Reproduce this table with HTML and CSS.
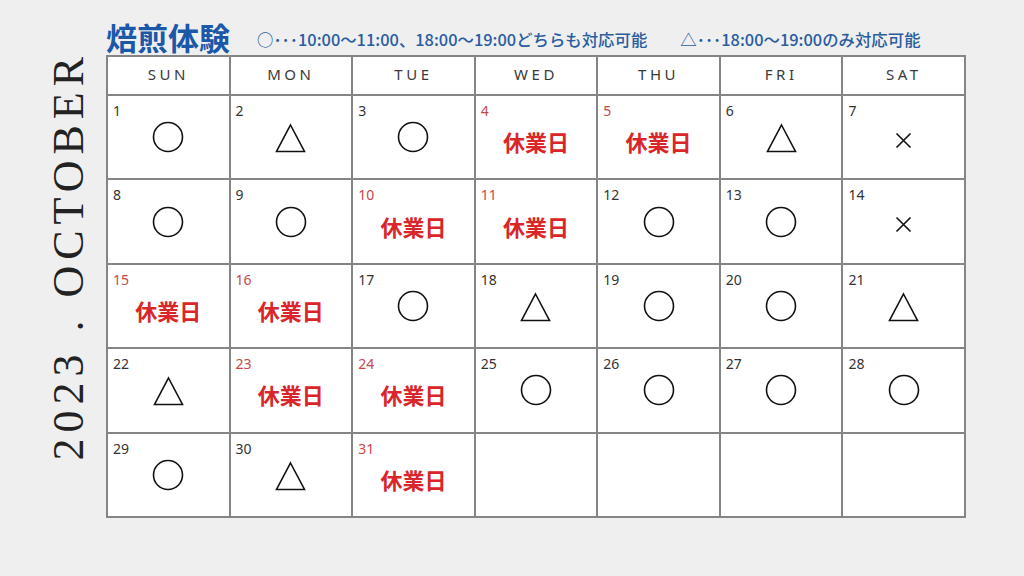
FILE: index.html
```html
<!DOCTYPE html>
<html lang="ja">
<head>
    <meta charset="UTF-8">
    <meta name="viewport" content="width=device-width, initial-scale=1.0">
    <title>焙煎体験 2023 . OCTOBER</title>
    <link rel="stylesheet" href="styles.css">
</head>
<body>
    <div class="page">
        <div class="side">
            <div class="month">2023 . OCTOBER</div>
        </div>
        <div class="main">
            <div class="head">
                <h1>焙煎体験</h1>
                <p class="legend">○･･･10:00～11:00、18:00～19:00どちらも対応可能</p>
                <p class="legend">△･･･18:00～19:00のみ対応可能</p>
            </div>
            <div class="cal">
                <div class="wd">SUN</div>
                <div class="wd">MON</div>
                <div class="wd">TUE</div>
                <div class="wd">WED</div>
                <div class="wd">THU</div>
                <div class="wd">FRI</div>
                <div class="wd">SAT</div>
            </div>
        </div>
    </div>
    <script>
        // o = both slots, t = evening only, x = full, c = closed
        const days = ['o','t','o','c','c','t','x',
                      'o','o','c','c','o','o','x',
                      'c','c','o','t','o','o','t',
                      't','c','c','o','o','o','o',
                      'o','t','c'];

        const marks = {
            o: '<svg class="mark" width="32" height="32" viewBox="0 0 32 32"><circle cx="16" cy="16" r="14.5"/></svg>',
            t: '<svg class="mark tri" width="31" height="30" viewBox="0 0 31 30"><polygon points="15.5,2 29.5,28.5 1.5,28.5"/></svg>',
            x: '<svg class="mark cross" width="17" height="17" viewBox="0 0 17 17"><path d="M1.5 1.5 L15.5 15.5 M15.5 1.5 L1.5 15.5"/></svg>',
            c: '<span class="mark closed">休業日</span>'
        };

        const cal = document.querySelector('.cal');
        for (let i = 0; i < 35; i++) {
            const cell = document.createElement('div');
            cell.className = 'day';
            const kind = days[i];
            if (kind) {
                if (kind === 'c') cell.classList.add('off');
                cell.innerHTML = '<span class="num">' + (i + 1) + '</span>' + marks[kind];
            }
            cal.appendChild(cell);
        }
    </script>
</body>
</html>
```

FILE: styles.css
```css
body {
    margin: 0;
    background: #efefef;
    font-family: "Noto Sans", "Noto Sans CJK JP", sans-serif;
    color: #333;
}

.page {
    display: flex;
    padding-top: 18px;
}

.side {
    width: 106px;
    display: flex;
    justify-content: flex-end;
    align-items: flex-start;
    padding-right: 15px;
    box-sizing: border-box;
}

.month {
    writing-mode: vertical-rl;
    transform: rotate(180deg);
    font-family: "Liberation Serif", "DejaVu Serif", serif;
    font-size: 44px;
    line-height: 1;
    letter-spacing: 6px;
    color: #222;
    margin-top: 33px;
}

.main {
    width: 860px;
}

/* title + legend */
.head {
    display: flex;
    align-items: center;
    height: 37px;
    color: #2a5d9f;
}

.head h1 {
    margin: 0 27px 0 0;
    font-family: "Noto Sans CJK JP", sans-serif;
    font-size: 31px;
    font-weight: 700;
    line-height: 37px;
    color: #1b58a8;
}

.legend {
    margin: 4px 33px 0 0;
    font-family: "Noto Sans CJK JP", sans-serif;
    font-size: 16.4px;
    font-weight: 500;
}

/* calendar grid */
.cal {
    display: grid;
    grid-template-columns: repeat(7, 1fr);
    grid-template-rows: 37px repeat(5, 82.4px);
    gap: 2px;
    padding: 2px;
    background: #858585;
}

.wd {
    background: #fff;
    display: flex;
    align-items: center;
    justify-content: center;
    padding-bottom: 3px;
    font-size: 15px;
    letter-spacing: 3.5px;
    color: #3a3a3a;
}

.day {
    background: #fff;
    display: grid;
}

.day > * {
    grid-area: 1 / 1;
}

.num {
    align-self: start;
    justify-self: start;
    margin: 7px 0 0 5px;
    font-size: 14px;
    line-height: 16px;
    color: #333;
}

.off .num {
    color: #c4484a;
}

.mark {
    place-self: center;
    fill: none;
    stroke: #111;
    stroke-width: 1.6;
}

.tri {
    margin-top: 2px;
}

.cross {
    margin-top: 6px;
}

.closed {
    margin-top: 8px;
    font-family: "Noto Sans CJK JP", sans-serif;
    font-size: 22px;
    font-weight: 700;
    color: #d8262a;
}
```
